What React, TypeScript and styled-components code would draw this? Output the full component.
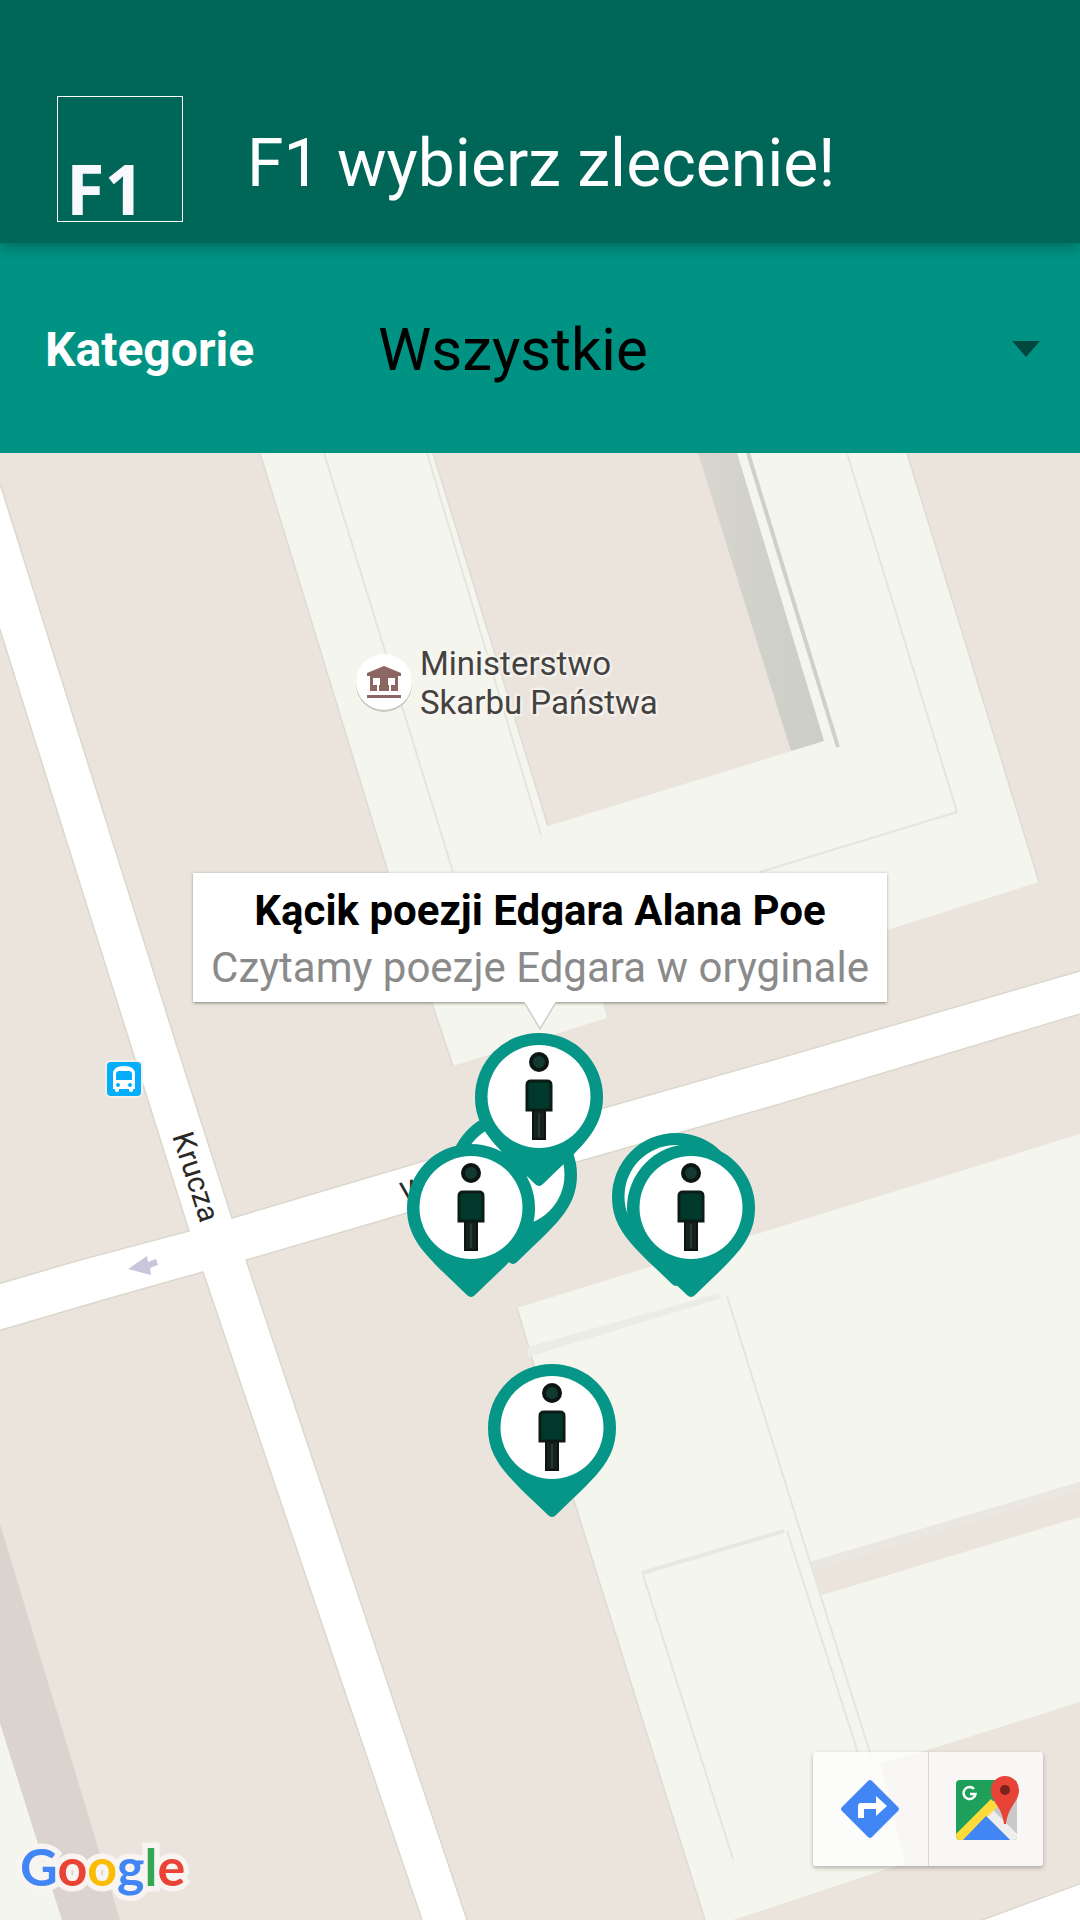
import React, { useState } from "react";
import styled, { createGlobalStyle } from "styled-components";

const color = {
  primary: "#009384",
  primaryDark: "#006658",
  pin: "#059687",
  land: "#eae4dd",
  building: "#f4f5ed",
  buildingLine: "#e5e5de",
  roadEdge: "#dcd8cc",
};

const GlobalStyle = createGlobalStyle`
  *, *::before, *::after { box-sizing: border-box; }
  body { margin: 0; background: ${color.land}; font-family: Roboto, "Noto Sans", sans-serif; }
  button, select { font: inherit; }
`;

const Page = styled.div`
  display: flex;
  flex-direction: column;
  min-height: 100vh;
`;

const Header = styled.header`
  position: relative;
  z-index: 1;
  display: flex;
  align-items: center;
  gap: 64px;
  padding: 96px 57px 21px;
  background: ${color.primaryDark};
  box-shadow: 0 2px 14px rgba(0, 60, 50, 0.6);
`;

const Logo = styled.div`
  flex: none;
  display: flex;
  align-items: flex-end;
  width: 126px;
  height: 126px;
  padding: 0 8px 8px;
  border: 1px solid #ffffff;
  color: #f8f8ff;
  font: 700 70px/50px "Open Sans", sans-serif;
`;

const Title = styled.h1`
  margin: 0;
  padding-top: 8px;
  color: #ffffff;
  font-size: 66px;
  font-weight: 400;
`;

const FilterBar = styled.div`
  display: flex;
  align-items: center;
  height: 210px;
  padding: 2px 40px 0 45px;
  background: ${color.primary};
`;

const FilterLabel = styled.label`
  width: 333px;
  color: #ffffff;
  font-size: 48px;
  font-weight: 700;
`;

const SelectBox = styled.div`
  position: relative;
  flex: 1;
  display: flex;
  align-items: center;
`;

const Select = styled.select`
  width: 100%;
  height: 96px;
  padding: 0;
  border: 0;
  appearance: none;
  background: transparent;
  color: #000000;
  font-size: 60px;
`;

const Caret = styled.span`
  position: absolute;
  right: 0;
  border: 14px solid transparent;
  border-top: 16px solid #00483e;
  border-bottom: 0;
  pointer-events: none;
`;

const MapArea = styled.main`
  position: relative;
  flex: 1;
  min-height: 960px;
  overflow: hidden;
  background: ${color.land};
`;

const MapDrawing = styled.svg`
  position: absolute;
  inset: 0;
  width: 100%;
  height: 100%;
  display: block;
`;

const Place = styled.div`
  position: absolute;
  left: 354px;
  top: 191px;
  display: flex;
  align-items: center;
  gap: 6px;
`;

const PlaceName = styled.span`
  color: #44423f;
  font-size: 33px;
  line-height: 39px;
  text-shadow: 0 0 3px #f8f5f0, 0 0 3px #f8f5f0, 2px 2px 2px #f8f5f0, -2px -2px 2px #f8f5f0;
`;

const StopIcon = styled.svg`
  position: absolute;
  left: 105px;
  top: 607px;
`;

const Pin = styled.button<{ $x: number; $y: number }>`
  position: absolute;
  left: ${(p) => p.$x}px;
  top: ${(p) => p.$y}px;
  width: 128px;
  height: 153px;
  padding: 0;
  border: 0;
  background: none;
  cursor: pointer;
  svg { display: block; }
`;

const InfoWindow = styled.section`
  position: absolute;
  left: 540px;
  top: 420px;
  transform: translateX(-50%);
  padding: 12px 18px 8px;
  background: #ffffff;
  box-shadow: 0 1px 3px rgba(60, 60, 40, 0.6);
  text-align: center;
  white-space: nowrap;
  font-size: 42px;
  line-height: 52px;
`;

const InfoTitle = styled.h2`
  margin: 0 0 5px;
  color: #000000;
  font-size: inherit;
  font-weight: 700;
`;

const InfoText = styled.p`
  margin: 0;
  color: #8a8a8a;
`;

const InfoTail = styled.svg`
  position: absolute;
  left: 50%;
  top: 100%;
  transform: translateX(-50%);
  display: block;
`;

const MapActions = styled.div`
  position: absolute;
  right: 37px;
  bottom: 54px;
  display: flex;
  border-radius: 3px;
  background: rgba(255, 255, 255, 0.7);
  box-shadow: 0 2px 4px rgba(80, 80, 70, 0.4);
`;

const ActionButton = styled.button`
  display: grid;
  place-items: center;
  width: 115px;
  height: 114px;
  padding: 0;
  border: 0;
  background: none;
  cursor: pointer;
  & + & { border-left: 1px solid #d8d8d4; }
`;

const Attribution = styled.a`
  position: absolute;
  left: 20px;
  bottom: 26px;
  isolation: isolate;
  color: #4285f4;
  font: 700 52px/56px Lato, sans-serif;
  text-decoration: none;

  &::before {
    content: "Google";
    position: absolute;
    inset: 0;
    z-index: -1;
    color: #f7f4f1;
    -webkit-text-stroke: 11px #f7f4f1;
  }
`;

const Letter = styled.span<{ $fill: string }>`
  color: ${(p) => p.$fill};
`;

function CityMap() {
  return (
    <MapDrawing viewBox="0 453 1080 1467" preserveAspectRatio="xMinYMin slice" aria-hidden="true">
      <defs>
        <linearGradient id="shade" x1="0" y1="0" x2="1" y2="0">
          <stop offset="0" stopColor="#d9d6cf" />
          <stop offset="0.5" stopColor="#d0d1c9" />
          <stop offset="1" stopColor="#cdcfc7" />
        </linearGradient>
      </defs>
      <rect y="453" width="1080" height="1467" fill={color.land} />

      <g fill={color.building}>
        <path d="M260 453 388 872 432 1003 453 1066 607 1018 598 985 887 930 1039 882 907 453Z" />
        <path d="M517 1308 1080 1134V1702L934 1748 880 1763 905 1863 733 1920H705L575 1504Z" />
        <path d="M0 1723 62 1920H0Z" />
      </g>
      <path d="M260 453 388 872M432 1003 453 1066M517 1308 575 1504 705 1920M1039 882 907 453" fill="none" stroke="#dfdbd4" strokeWidth="1.5" />

      <path d="M433 453 548 826 824 741 737 453Z" fill={color.land} />
      <path d="M698 453H737L824 741 791 751Z" fill="url(#shade)" />
      <path d="M748 453 838 747" stroke="#cfd0c8" strokeWidth="4" />
      <path d="M433 453 548 826" stroke="#dfdbd4" strokeWidth="1.5" />
      <path d="M810 1562 1080 1482V1517L822 1595Z" fill={color.land} />
      <path d="M810 1562 1080 1482V1490L813 1571Z" fill="#e9e7e0" />
      <path d="M528 1347 719 1293 722 1298 528 1357Z" fill="#ebece4" />
      <path d="M642 1573 784 1531" stroke="#e8e8e1" strokeWidth="4" />
      <g fill="none" stroke={color.buildingLine} strokeWidth="2">
        <path d="M324 453 453 872" />
        <path d="M427 453 541 835" />
        <path d="M847 453 957 812 760 872" />
        <path d="M727 1296 810 1562 871 1756" />
        <path d="M787 1531 859 1756" />
        <path d="M643 1575 733 1859" />
      </g>
      <path d="M0 1524 120 1920H62L0 1723Z" fill="#dad3ce" />

      <path
        d="M-9 455 175 1040 232 1218 380 1174 607 1107 780 1058 1090 968V1011L780 1104 577 1162 380 1221 246 1260 470 1929H425L203 1272 107 1299 -9 1333V1286L80 1260 189 1231 129 1040 -9 601Z"
        fill="#ffffff"
        stroke={color.roadEdge}
        strokeWidth="1.5"
      />
      <path d="M958 1929 1090 1880V1929Z" fill="#ffffff" stroke={color.roadEdge} strokeWidth="1.5" />

      <path d="M128 1269 147 1256 148 1262 156 1259 158 1265 150 1268 151 1275Z" fill="#c9c5db" />
      <g fill="#2b2927" fontFamily="Roboto, sans-serif" fontSize="30">
        <text transform="translate(172 1136) rotate(72)">Krucza</text>
        <text transform="translate(404 1204) rotate(-16)">W</text>
      </g>
    </MapDrawing>
  );
}

function PinIcon() {
  return (
    <svg width="128" height="153" viewBox="0 0 128 153" aria-hidden="true">
      <path d="M0 64A64 64 0 0 1 128 64C128 98 105 115 68 151Q64 155 60 151C23 115 0 98 0 64Z" fill={color.pin} />
      <circle cx="64" cy="63.5" r="51.5" fill="#ffffff" />
      <circle cx="64" cy="29" r="8" fill="#123a30" stroke="#0d1513" strokeWidth="4" />
      <path d="M58 77H70V106H58Z" fill="#14211e" stroke="#0d1513" strokeWidth="2" />
      <path d="M64 80V104" stroke="#33423e" strokeWidth="1.5" />
      <path d="M56 48H72Q76 48 76 52V77H52V52Q52 48 56 48Z" fill="#00382c" stroke="#0d1b17" strokeWidth="3" />
    </svg>
  );
}

function MuseumIcon() {
  return (
    <svg width="60" height="62" viewBox="0 0 60 62" aria-hidden="true">
      <circle cx="30" cy="32" r="28" fill="#c9c5c1" />
      <circle cx="30" cy="30" r="28" fill="#ffffff" />
      <g fill="#8d6663">
        <path d="M30 14 47 21V24H13V21Z" />
        <path d="M16 24H44V39H37V33H41V26H34V33H35V39H25V33H26V26H19V33H23V39H16Z" />
        <rect x="13" y="43" width="34" height="3" />
      </g>
    </svg>
  );
}

function BusIcon() {
  return (
    <StopIcon width="38" height="38" viewBox="0 0 38 38" role="img" aria-label="Przystanek">
      <rect x="0" y="0" width="38" height="38" rx="6" fill="#f2eeea" />
      <rect x="2" y="2" width="34" height="34" rx="4" fill="#04aefb" />
      <path d="M8 14Q8 6 19 6T30 14V29H28V31Q26 33 24 31V29H14V31Q12 33 10 31V29H8Z" fill="#ffffff" />
      <path d="M13 11H25L27 13V20H11V13Z" fill="#04aefb" />
      <circle cx="13" cy="25" r="2" fill="#04aefb" />
      <circle cx="25" cy="25" r="2" fill="#04aefb" />
    </StopIcon>
  );
}

function DirectionsIcon() {
  return (
    <svg width="60" height="60" viewBox="0 0 60 60" aria-hidden="true">
      <path d="M27 2Q29 0 31 2L57 28Q59 30 57 32L31 58Q29 60 27 58L1 32Q-1 30 1 28Z" fill="#4285f4" />
      <path d="M17 39V27Q17 24 20 24H35V17L46 27 35 37V30H23V39Z" fill="#ffffff" />
    </svg>
  );
}

function MapsIcon() {
  return (
    <svg width="66" height="66" viewBox="-2 1 66 66" aria-hidden="true">
      <defs>
        <clipPath id="tile"><rect x="1" y="5" width="61" height="60" rx="4" /></clipPath>
      </defs>
      <g clipPath="url(#tile)">
        <rect x="1" y="5" width="61" height="60" fill="#1fa05a" />
        <path d="M36 28 62 10V65H55L31 41Z" fill="#c9c9c9" />
        <path d="M31 41 36 33 62 59V65H55Z" fill="#eeeeee" />
        <path d="M0 60 36 24 43 31 8 66H0Z" fill="#fddb3a" />
        <path d="M8 65 31 41 55 65Z" fill="#4285f4" />
      </g>
      <path d="M19 14A6 6 0 1 0 20.500 19H15" fill="none" stroke="#ffffff" strokeWidth="2.500" />
      <path d="M50 1A14 14 0 0 1 64 15C64 27 53 31 51 49H49C47 31 36 27 36 15A14 14 0 0 1 50 1Z" fill="#e84336" />
      <circle cx="50" cy="15" r="5" fill="#7a231c" />
    </svg>
  );
}

const pins = [
  { x: 449, y: 658, name: "Zlecenie 1" },
  { x: 475, y: 580, name: "Kącik poezji Edgara Alana Poe" },
  { x: 407, y: 691, name: "Zlecenie 3" },
  { x: 612, y: 680, name: "Zlecenie 4" },
  { x: 627, y: 691, name: "Zlecenie 5" },
  { x: 488, y: 911, name: "Zlecenie 6" },
];

export default function App() {
  const [category, setCategory] = useState("Wszystkie");
  return (
    <Page>
      <GlobalStyle />
      <Header>
        <Logo>F1</Logo>
        <Title>F1 wybierz zlecenie!</Title>
      </Header>
      <FilterBar>
        <FilterLabel htmlFor="category">Kategorie</FilterLabel>
        <SelectBox>
          <Select id="category" value={category} onChange={(e) => setCategory(e.target.value)}>
            <option>Wszystkie</option>
          </Select>
          <Caret />
        </SelectBox>
      </FilterBar>
      <MapArea>
        <CityMap />
        <Place>
          <MuseumIcon />
          <PlaceName>
            Ministerstwo
            <br />
            Skarbu Państwa
          </PlaceName>
        </Place>
        <BusIcon />
        {pins.map((pin) => (
          <Pin key={pin.name} type="button" aria-label={pin.name} $x={pin.x} $y={pin.y}>
            <PinIcon />
          </Pin>
        ))}
        <InfoWindow>
          <InfoTitle>Kącik poezji Edgara Alana Poe</InfoTitle>
          <InfoText>Czytamy poezje Edgara w oryginale</InfoText>
          <InfoTail width="32" height="28" viewBox="0 0 32 28" aria-hidden="true">
            <path d="M0 0 16 27 32 0" fill="#ffffff" stroke="#cfcfca" strokeWidth="1.500" />
            <path d="M2 -2H30V1H2Z" fill="#ffffff" />
          </InfoTail>
        </InfoWindow>
        <MapActions>
          <ActionButton type="button" aria-label="Wyznacz trasę">
            <DirectionsIcon />
          </ActionButton>
          <ActionButton type="button" aria-label="Otwórz w Mapach">
            <MapsIcon />
          </ActionButton>
        </MapActions>
        <Attribution href="#map">
          G<Letter $fill="#ea4335">o</Letter>
          <Letter $fill="#fbbc05">o</Letter>g<Letter $fill="#34a853">l</Letter>
          <Letter $fill="#ea4335">e</Letter>
        </Attribution>
      </MapArea>
    </Page>
  );
}
